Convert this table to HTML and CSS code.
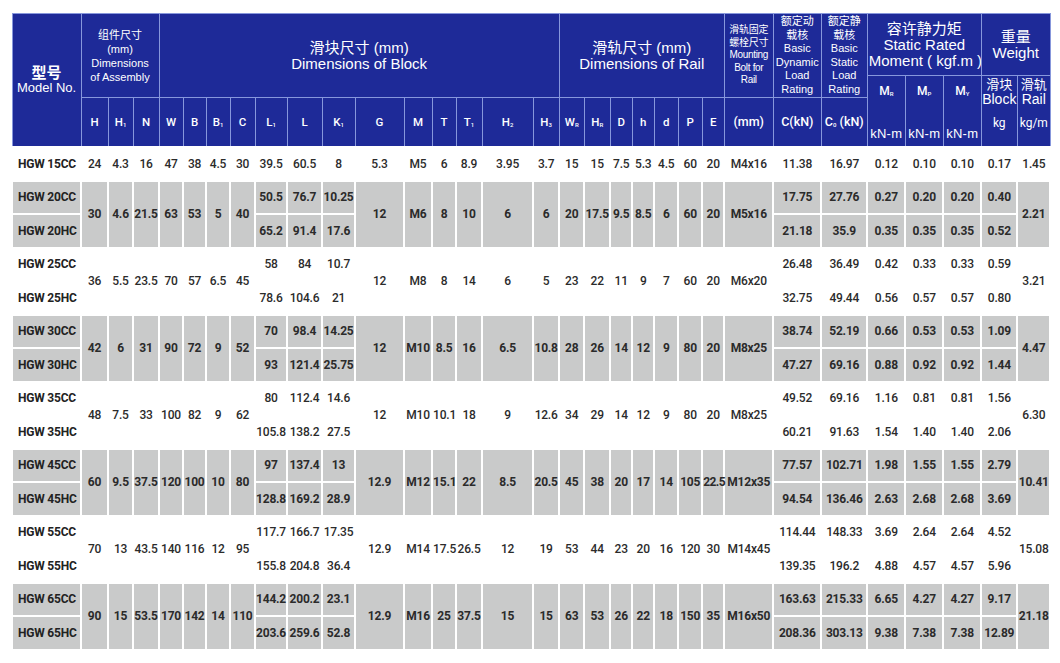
FILE: index.html
```html
<!DOCTYPE html>
<html lang="zh">
<head>
<meta charset="utf-8">
<title>HGW</title>
<link rel="stylesheet" href="styles.css">
</head>
<body>
<table class="spec">
<colgroup>
<col style="width:69px"><col style="width:27px"><col style="width:25px"><col style="width:26px"><col style="width:24px"><col style="width:23px"><col style="width:24px"><col style="width:25px"><col style="width:32px"><col style="width:35px"><col style="width:33px"><col style="width:49px"><col style="width:28px"><col style="width:24px"><col style="width:26px"><col style="width:51px"><col style="width:26px"><col style="width:25px"><col style="width:26px"><col style="width:22px"><col style="width:22px"><col style="width:24px"><col style="width:24px"><col style="width:22px"><col style="width:49px"><col style="width:48px"><col style="width:46px"><col style="width:38px"><col style="width:38px"><col style="width:38px"><col style="width:36px"><col style="width:33px">
</colgroup>
<thead>
<tr class="ha">
<th rowspan="3" class="model-h"><div class="zh-big">型号</div><div class="en-md">Model No.</div></th>
<th rowspan="2" colspan="3" class="grp-s"><div>组件尺寸</div><div>(mm)</div><div>Dimensions</div><div>of Assembly</div></th>
<th rowspan="2" colspan="13" class="grp-l"><div>滑块尺寸 (mm)</div><div>Dimensions of Block</div></th>
<th rowspan="2" colspan="7" class="grp-l"><div>滑轨尺寸 (mm)</div><div>Dimensions of Rail</div></th>
<th rowspan="2" class="grp-xs"><div>滑轨固定</div><div>螺栓尺寸</div><div>Mounting</div><div>Bolt for</div><div>Rail</div></th>
<th rowspan="2" class="grp-xs2"><div>额定动</div><div>载核</div><div>Basic</div><div>Dynamic</div><div>Load</div><div>Rating</div></th>
<th rowspan="2" class="grp-xs2"><div>额定静</div><div>载核</div><div>Basic</div><div>Static</div><div>Load</div><div>Rating</div></th>
<th colspan="3" class="grp-m"><div>容许静力矩</div><div>Static Rated</div><div class="nowrap">Moment ( kgf.m )</div></th>
<th colspan="2" class="grp-m grp-w"><div>重量</div><div>Weight</div></th>
</tr>
<tr class="hb">
<th rowspan="2" class="mom"><div class="sym">M<sub>R</sub></div><div class="unit">kN-m</div></th>
<th rowspan="2" class="mom"><div class="sym">M<sub>P</sub></div><div class="unit">kN-m</div></th>
<th rowspan="2" class="mom"><div class="sym">M<sub>Y</sub></div><div class="unit">kN-m</div></th>
<th rowspan="2" class="wt"><div class="zh">滑块</div><div class="en">Block</div><div class="unit">kg</div></th>
<th rowspan="2" class="wt"><div class="zh">滑轨</div><div class="en">Rail</div><div class="unit">kg/m</div></th>
</tr>
<tr class="hc">
<th>H</th><th>H<sub>1</sub></th><th>N</th><th>W</th><th>B</th><th>B<sub>1</sub></th><th>C</th><th>L<sub>1</sub></th><th>L</th><th>K<sub>1</sub></th><th>G</th><th>M</th><th>T</th><th>T<sub>1</sub></th><th>H<sub>2</sub></th><th>H<sub>3</sub></th><th>W<sub>R</sub></th><th>H<sub>R</sub></th><th>D</th><th>h</th><th>d</th><th>P</th><th>E</th><th class="u">(mm)</th><th class="u">C(kN)</th><th class="u">C<sub>0</sub> (kN)</th>
</tr>
</thead>
<tbody>
<tr class="w r1">
<td class="model">HGW 15CC</td><td>24</td><td>4.3</td><td>16</td><td>47</td><td>38</td><td>4.5</td><td>30</td><td>39.5</td><td>60.5</td><td>8</td><td>5.3</td><td>M5</td><td>6</td><td>8.9</td><td>3.95</td><td>3.7</td><td>15</td><td>15</td><td>7.5</td><td>5.3</td><td>4.5</td><td>60</td><td>20</td><td>M4x16</td><td>11.38</td><td>16.97</td><td>0.12</td><td>0.10</td><td>0.10</td><td>0.17</td><td>1.45</td>
</tr>
<tr class="g">
<td class="model">HGW 20CC</td><td rowspan="2">30</td><td rowspan="2">4.6</td><td rowspan="2">21.5</td><td rowspan="2">63</td><td rowspan="2">53</td><td rowspan="2">5</td><td rowspan="2">40</td><td>50.5</td><td>76.7</td><td>10.25</td><td rowspan="2">12</td><td rowspan="2">M6</td><td rowspan="2">8</td><td rowspan="2">10</td><td rowspan="2">6</td><td rowspan="2">6</td><td rowspan="2">20</td><td rowspan="2">17.5</td><td rowspan="2">9.5</td><td rowspan="2">8.5</td><td rowspan="2">6</td><td rowspan="2">60</td><td rowspan="2">20</td><td rowspan="2">M5x16</td><td>17.75</td><td>27.76</td><td>0.27</td><td>0.20</td><td>0.20</td><td>0.40</td><td rowspan="2">2.21</td>
</tr>
<tr class="g">
<td class="model">HGW 20HC</td><td>65.2</td><td>91.4</td><td>17.6</td><td>21.18</td><td>35.9</td><td>0.35</td><td>0.35</td><td>0.35</td><td>0.52</td>
</tr>
<tr class="w">
<td class="model">HGW 25CC</td><td rowspan="2">36</td><td rowspan="2">5.5</td><td rowspan="2">23.5</td><td rowspan="2">70</td><td rowspan="2">57</td><td rowspan="2">6.5</td><td rowspan="2">45</td><td>58</td><td>84</td><td>10.7</td><td rowspan="2">12</td><td rowspan="2">M8</td><td rowspan="2">8</td><td rowspan="2">14</td><td rowspan="2">6</td><td rowspan="2">5</td><td rowspan="2">23</td><td rowspan="2">22</td><td rowspan="2">11</td><td rowspan="2">9</td><td rowspan="2">7</td><td rowspan="2">60</td><td rowspan="2">20</td><td rowspan="2">M6x20</td><td>26.48</td><td>36.49</td><td>0.42</td><td>0.33</td><td>0.33</td><td>0.59</td><td rowspan="2">3.21</td>
</tr>
<tr class="w">
<td class="model">HGW 25HC</td><td>78.6</td><td>104.6</td><td>21</td><td>32.75</td><td>49.44</td><td>0.56</td><td>0.57</td><td>0.57</td><td>0.80</td>
</tr>
<tr class="g">
<td class="model">HGW 30CC</td><td rowspan="2">42</td><td rowspan="2">6</td><td rowspan="2">31</td><td rowspan="2">90</td><td rowspan="2">72</td><td rowspan="2">9</td><td rowspan="2">52</td><td>70</td><td>98.4</td><td>14.25</td><td rowspan="2">12</td><td rowspan="2">M10</td><td rowspan="2">8.5</td><td rowspan="2">16</td><td rowspan="2">6.5</td><td rowspan="2">10.8</td><td rowspan="2">28</td><td rowspan="2">26</td><td rowspan="2">14</td><td rowspan="2">12</td><td rowspan="2">9</td><td rowspan="2">80</td><td rowspan="2">20</td><td rowspan="2">M8x25</td><td>38.74</td><td>52.19</td><td>0.66</td><td>0.53</td><td>0.53</td><td>1.09</td><td rowspan="2">4.47</td>
</tr>
<tr class="g">
<td class="model">HGW 30HC</td><td>93</td><td>121.4</td><td>25.75</td><td>47.27</td><td>69.16</td><td>0.88</td><td>0.92</td><td>0.92</td><td>1.44</td>
</tr>
<tr class="w">
<td class="model">HGW 35CC</td><td rowspan="2">48</td><td rowspan="2">7.5</td><td rowspan="2">33</td><td rowspan="2">100</td><td rowspan="2">82</td><td rowspan="2">9</td><td rowspan="2">62</td><td>80</td><td>112.4</td><td>14.6</td><td rowspan="2">12</td><td rowspan="2">M10</td><td rowspan="2">10.1</td><td rowspan="2">18</td><td rowspan="2">9</td><td rowspan="2">12.6</td><td rowspan="2">34</td><td rowspan="2">29</td><td rowspan="2">14</td><td rowspan="2">12</td><td rowspan="2">9</td><td rowspan="2">80</td><td rowspan="2">20</td><td rowspan="2">M8x25</td><td>49.52</td><td>69.16</td><td>1.16</td><td>0.81</td><td>0.81</td><td>1.56</td><td rowspan="2">6.30</td>
</tr>
<tr class="w">
<td class="model">HGW 35HC</td><td>105.8</td><td>138.2</td><td>27.5</td><td>60.21</td><td>91.63</td><td>1.54</td><td>1.40</td><td>1.40</td><td>2.06</td>
</tr>
<tr class="g">
<td class="model">HGW 45CC</td><td rowspan="2">60</td><td rowspan="2">9.5</td><td rowspan="2">37.5</td><td rowspan="2">120</td><td rowspan="2">100</td><td rowspan="2">10</td><td rowspan="2">80</td><td>97</td><td>137.4</td><td>13</td><td rowspan="2">12.9</td><td rowspan="2">M12</td><td rowspan="2">15.1</td><td rowspan="2">22</td><td rowspan="2">8.5</td><td rowspan="2">20.5</td><td rowspan="2">45</td><td rowspan="2">38</td><td rowspan="2">20</td><td rowspan="2">17</td><td rowspan="2">14</td><td rowspan="2">105</td><td rowspan="2" class="tight">22.5</td><td rowspan="2">M12x35</td><td>77.57</td><td>102.71</td><td>1.98</td><td>1.55</td><td>1.55</td><td>2.79</td><td rowspan="2">10.41</td>
</tr>
<tr class="g">
<td class="model">HGW 45HC</td><td>128.8</td><td>169.2</td><td>28.9</td><td>94.54</td><td>136.46</td><td>2.63</td><td>2.68</td><td>2.68</td><td>3.69</td>
</tr>
<tr class="w">
<td class="model">HGW 55CC</td><td rowspan="2">70</td><td rowspan="2">13</td><td rowspan="2">43.5</td><td rowspan="2">140</td><td rowspan="2">116</td><td rowspan="2">12</td><td rowspan="2">95</td><td>117.7</td><td>166.7</td><td>17.35</td><td rowspan="2">12.9</td><td rowspan="2">M14</td><td rowspan="2">17.5</td><td rowspan="2">26.5</td><td rowspan="2">12</td><td rowspan="2">19</td><td rowspan="2">53</td><td rowspan="2">44</td><td rowspan="2">23</td><td rowspan="2">20</td><td rowspan="2">16</td><td rowspan="2">120</td><td rowspan="2">30</td><td rowspan="2">M14x45</td><td>114.44</td><td>148.33</td><td>3.69</td><td>2.64</td><td>2.64</td><td>4.52</td><td rowspan="2">15.08</td>
</tr>
<tr class="w">
<td class="model">HGW 55HC</td><td>155.8</td><td>204.8</td><td>36.4</td><td>139.35</td><td>196.2</td><td>4.88</td><td>4.57</td><td>4.57</td><td>5.96</td>
</tr>
<tr class="g">
<td class="model">HGW 65CC</td><td rowspan="2">90</td><td rowspan="2">15</td><td rowspan="2">53.5</td><td rowspan="2">170</td><td rowspan="2">142</td><td rowspan="2">14</td><td rowspan="2">110</td><td>144.2</td><td>200.2</td><td>23.1</td><td rowspan="2">12.9</td><td rowspan="2">M16</td><td rowspan="2">25</td><td rowspan="2">37.5</td><td rowspan="2">15</td><td rowspan="2">15</td><td rowspan="2">63</td><td rowspan="2">53</td><td rowspan="2">26</td><td rowspan="2">22</td><td rowspan="2">18</td><td rowspan="2">150</td><td rowspan="2">35</td><td rowspan="2">M16x50</td><td>163.63</td><td>215.33</td><td>6.65</td><td>4.27</td><td>4.27</td><td>9.17</td><td rowspan="2">21.18</td>
</tr>
<tr class="g">
<td class="model">HGW 65HC</td><td>203.6</td><td>259.6</td><td>52.8</td><td>208.36</td><td>303.13</td><td>9.38</td><td>7.38</td><td>7.38</td><td>12.89</td>
</tr>
</tbody>
</table>
</body>
</html>
```
FILE: styles.css
```css
html, body {
  margin: 0;
  padding: 0;
  background: #ffffff;
}
body {
  font-family: Roboto, "Noto Sans CJK SC", sans-serif;
}
.spec {
  border-collapse: collapse;
  table-layout: fixed;
  width: 1038px;
  margin: 13px 0 0 11px;
}
.spec th {
  background: #1e2a98;
  color: #ffffff;
  border: 1px solid #8797dc;
  font-weight: normal;
  padding: 0;
  text-align: center;
  overflow: hidden;
  font-family: "Liberation Sans", "Noto Sans CJK SC", sans-serif;
}
.ha { height: 62px; }
.hb { height: 22px; }
.hc { height: 49px; }

.model-h .zh-big {
  font-family: "Noto Sans CJK SC", sans-serif;
  font-size: 15px;
  font-weight: 700;
  line-height: 16px;
}
.model-h .en-md {
  font-size: 13px;
  line-height: 15px;
}
.grp-s {
  font-size: 11px;
  line-height: 14px;
}
.grp-l {
  font-size: 15px;
  line-height: 16px;
}
.grp-xs {
  font-size: 10px;
  line-height: 12.5px;
  letter-spacing: -0.3px;
  white-space: nowrap;
}
.grp-xs2 {
  font-size: 11px;
  line-height: 13.5px;
  white-space: nowrap;
}
.grp-m {
  font-size: 15px;
  line-height: 16px;
  vertical-align: middle;
  padding-bottom: 4px;
}
.grp-w { padding-bottom: 0; padding-top: 6px; }
.nowrap {
  white-space: nowrap;
  text-align: left;
  padding-left: 1px;
}
.mom {
  vertical-align: top;
  font-family: Roboto, sans-serif;
}
.mom .sym {
  font-family: Roboto, sans-serif;
  font-weight: 500;
  font-size: 12px;
  line-height: 16px;
  padding-top: 7px;
}
.mom .unit {
  font-family: "Liberation Sans", sans-serif;
  font-size: 13px;
  line-height: 16px;
  margin-top: 27px;
  white-space: nowrap;
  letter-spacing: 0.2px;
}
.wt {
  vertical-align: top;
  white-space: nowrap;
  padding-top: 10px;
}
.wt .zh {
  font-family: "Noto Sans CJK SC", sans-serif;
  font-size: 13px;
  line-height: 16px;
}
.wt .en {
  font-size: 14px;
  line-height: 14px;
}
.wt .unit {
  font-family: Roboto, sans-serif;
  font-size: 12px;
  line-height: 14px;
  margin-top: 10px;
}
.hc th {
  font-family: Roboto, sans-serif;
  font-weight: 500;
  font-size: 11.5px;
}
.hc th.u {
  font-size: 12.5px;
  white-space: nowrap;
}
.spec sub {
  font-size: 6px;
  vertical-align: -1px;
  line-height: 0;
}
.spec td {
  border: 2px solid #ffffff;
  padding: 0;
  text-align: center;
  color: #2b2b2b;
  font-size: 12px;
  letter-spacing: -0.2px;
  white-space: nowrap;
}
.spec td.tight {
  letter-spacing: -0.6px;
}
.spec tbody tr { height: 33.5px; }
.spec tbody tr.r1 { height: 34px; }
.g td {
  background: #c9caca;
  font-weight: 700;
}
.w td {
  font-weight: 500;
}
.spec td.model {
  text-align: left;
  padding-left: 5px;
  font-weight: 700;
  color: #222222;
}
```
